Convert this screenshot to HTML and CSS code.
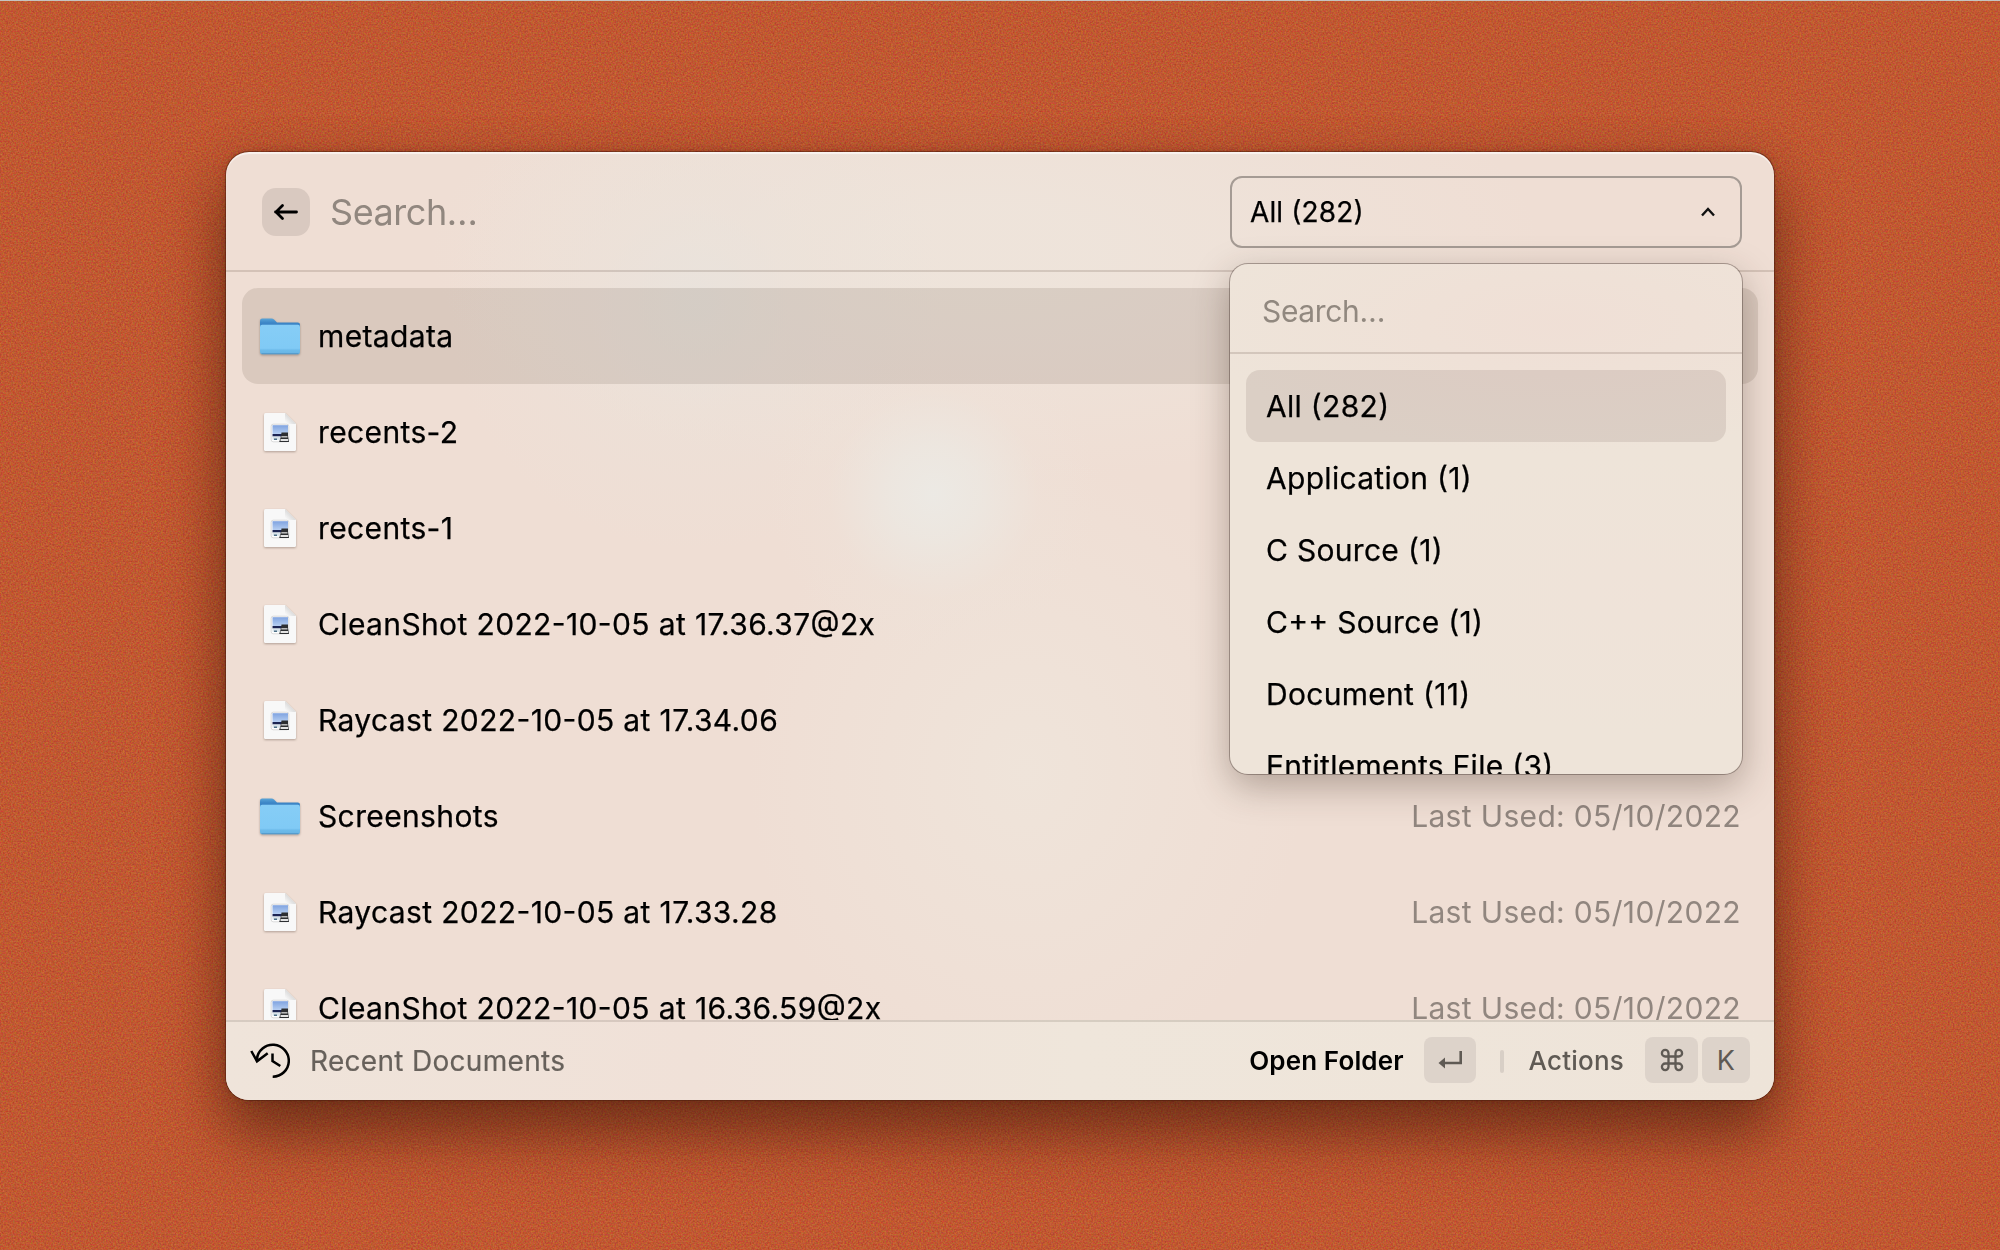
FILE: index.html
```
<!DOCTYPE html>
<html lang="en">
<head>
<meta charset="utf-8">
<title>Recent Documents</title>
<link rel="stylesheet" href="styles.css">
</head>
<body>
<svg class="grain" aria-hidden="true">
  <filter id="noise" x="0" y="0" width="100%" height="100%" color-interpolation-filters="sRGB">
    <feTurbulence type="fractalNoise" baseFrequency="0.6" numOctaves="2" seed="4"/>
    <feColorMatrix values="1.8 0 0 0 -0.4  0 1.8 0 0 -0.4  0 0 1.8 0 -0.4  0 0 0 0 1"/>
  </filter>
  <rect width="100%" height="100%" filter="url(#noise)"/>
</svg>

<svg class="defs" aria-hidden="true">
  <defs>
    <linearGradient id="folder-front" x1="0" y1="0" x2="0" y2="1">
      <stop offset="0" stop-color="#86cdf6"/><stop offset=".8" stop-color="#80caf5"/><stop offset=".86" stop-color="#6dbbea"/><stop offset="1" stop-color="#67b3e3"/>
    </linearGradient>
    <linearGradient id="folder-back" x1="0" y1="0" x2="0" y2="1">
      <stop offset="0" stop-color="#5aa5d8"/><stop offset=".25" stop-color="#3c85c6"/>
    </linearGradient>
    <linearGradient id="sky" x1="0" y1="0" x2="0" y2="1">
      <stop offset="0" stop-color="#7fa3e0"/><stop offset="1" stop-color="#b7cff2"/>
    </linearGradient>
    <linearGradient id="fold" x1="0" y1="1" x2="1" y2="0">
      <stop offset="0" stop-color="#ffffff"/><stop offset=".5" stop-color="#dcdcdc"/>
    </linearGradient>
    <symbol id="folder" viewBox="0 0 40 40">
      <path d="M0 4.700Q0 2.500 2.200 2.500H11.500Q13 2.500 14 3.500L17 6.500H37.800Q40 6.500 40 8.700V20H0Z" fill="url(#folder-back)"/>
      <rect y="8.700" width="40" height="29.500" rx="2.200" fill="url(#folder-front)"/>
      <path d="M1.500 37.700H38.500" stroke="#4f93c4" stroke-width=".9"/>
    </symbol>
    <symbol id="image-file" viewBox="0 0 40 40">
      <path d="M5.500 1H25L36 12V37.500Q36 39 34.500 39H5.500Q4 39 4 37.500V2.500Q4 1 5.500 1Z" fill="#f8f8f8"/>
      <path d="M25 1 36 12H26.500Q25 12 25 10.500Z" fill="url(#fold)"/>
      <rect x="11.200" y="12.200" width="17.600" height="17.600" rx="2" fill="#fff" stroke="#cdcdcd" stroke-width=".7"/>
      <rect x="12.500" y="13.200" width="15.500" height="8.800" fill="url(#sky)"/>
      <path d="M12.500 22H22V24.500H12.500Z" fill="#1b2452"/>
      <path d="M12.500 24.500H20V27.800H12.500Z" fill="#d9e4ea"/>
      <path d="M14 26.500H17V28H14Z" fill="#4d6f86"/>
      <path d="M21.500 20.500H28V24L29 30H19.200L21 24Z" fill="#2c2e31"/>
      <path d="M21.300 24.800H27.500" stroke="#c9c9c9" stroke-width="1.400"/>
      <path d="M20.500 28H28.200" stroke="#e4e4e4" stroke-width="2"/>
    </symbol>
  </defs>
</svg>

<main class="window">
  <header class="header">
    <button class="back" aria-label="Back"><svg viewBox="0 0 48 48"><path d="M13.500 24H34.500M20.500 17.500 14 24l6.500 6.500"/></svg></button>
    <div class="search">Search…</div>
    <div class="filter">
      <div class="select"><span>All (282)</span><svg viewBox="0 0 16 12"><path d="M2 9.500 8 3l6 6.500"/></svg></div>
      <div class="menu">
        <div class="menu-search">Search…</div>
        <div class="options">
          <div class="option active">All (282)</div>
          <div class="option">Application (1)</div>
          <div class="option">C Source (1)</div>
          <div class="option">C++ Source (1)</div>
          <div class="option">Document (11)</div>
          <div class="option">Entitlements File (3)</div>
        </div>
      </div>
    </div>
  </header>

  <section class="list">
    <div class="row active"><svg class="icon"><use href="#folder"/></svg><span class="name">metadata</span></div>
    <div class="row"><svg class="icon"><use href="#image-file"/></svg><span class="name">recents-2</span></div>
    <div class="row"><svg class="icon"><use href="#image-file"/></svg><span class="name">recents-1</span></div>
    <div class="row"><svg class="icon"><use href="#image-file"/></svg><span class="name">CleanShot 2022-10-05 at 17.36.37@2x</span></div>
    <div class="row"><svg class="icon"><use href="#image-file"/></svg><span class="name">Raycast 2022-10-05 at 17.34.06</span></div>
    <div class="row"><svg class="icon"><use href="#folder"/></svg><span class="name">Screenshots</span><span class="used">Last Used: 05/10/2022</span></div>
    <div class="row"><svg class="icon"><use href="#image-file"/></svg><span class="name">Raycast 2022-10-05 at 17.33.28</span><span class="used">Last Used: 05/10/2022</span></div>
    <div class="row"><svg class="icon"><use href="#image-file"/></svg><span class="name">CleanShot 2022-10-05 at 16.36.59@2x</span><span class="used">Last Used: 05/10/2022</span></div>
  </section>

  <footer class="footer">
    <svg class="history" viewBox="0 0 40 40"><path d="M6.900 18A16 16 0 1 1 22.700 35.700M1.300 10 7 20.300 17.700 12.300M22.500 12.500V20L30.300 25"/></svg>
    <span class="title">Recent Documents</span>
    <span class="primary">Open Folder</span>
    <span class="key enter"><svg viewBox="0 0 24 24"><path d="M22.700 3V15H5" fill="none" stroke="currentColor" stroke-width="2.600"/><path d="M0.500 15 7 9.500V20.500Z" fill="currentColor"/></svg></span>
    <span class="separator"></span>
    <span class="actions">Actions</span>
    <span class="key cmd"><svg viewBox="0 0 24 24"><path d="M8.500 8.500H15.500V15.500H8.500ZM8.500 8.500V5.200A3.300 3.300 0 1 0 5.200 8.500ZM15.500 8.500H18.800A3.300 3.300 0 1 0 15.500 5.200ZM15.500 15.500V18.800A3.300 3.300 0 1 0 18.800 15.500ZM8.500 15.500H5.200A3.300 3.300 0 1 0 8.500 18.800Z" fill="none" stroke="currentColor" stroke-width="2.300"/></svg></span>
    <span class="key letter">K</span>
  </footer>
</main>
</body>
</html>
```
FILE: styles.css
```
* { box-sizing: border-box; }

body {
  margin: 0;
  width: 2000px;
  height: 1250px;
  overflow: hidden;
  border-top: 1px solid #c6c3c0;
  background: #c05831;
  padding: 151px 226px 150px;
  font-family: Inter, "Liberation Sans", sans-serif;
  font-size: 30px;
  font-weight: 400;
  font-feature-settings: "calt" 1;
  letter-spacing: 0.37px;
  color: #000;
}

.grain {
  position: absolute;
  left: 0;
  top: 1px;
  width: 2000px;
  height: 1249px;
  opacity: 0.27;
  mix-blend-mode: overlay;
}

.defs { position: absolute; width: 0; height: 0; }

.window {
  position: relative;
  display: flex;
  flex-direction: column;
  width: 1548px;
  height: 948px;
  border-radius: 23px;
  background:
    radial-gradient(circle at 708px 342px, rgba(236, 234, 229, 0.95) 0, rgba(236, 233, 227, 0.75) 45px, rgba(238, 226, 217, 0.4) 105px, rgba(238, 224, 214, 0) 165px),
    radial-gradient(circle at 470px 150px, rgba(232, 227, 221, 0.8) 0, rgba(235, 226, 218, 0.5) 110px, rgba(238, 224, 214, 0) 250px),
    radial-gradient(ellipse 560px 230px at 760px 100px, rgba(238, 229, 220, 0.8) 20%, rgba(238, 224, 214, 0) 100%),
    radial-gradient(ellipse 280px 320px at 800px 620px, rgba(239, 229, 219, 0.85) 0, rgba(239, 224, 214, 0) 100%),
    #efded4;
  box-shadow:
    0 0 0 1px rgba(70, 25, 10, 0.45),
    0 0 6px rgba(60, 20, 5, 0.25),
    0 36px 60px rgba(50, 18, 5, 0.5),
    0 10px 50px rgba(50, 18, 5, 0.14),
    inset 0 2px 1px rgba(255, 255, 255, 0.6);
}

.header {
  flex: none;
  display: flex;
  align-items: center;
  height: 120px;
  padding: 2px 32px 0 36px;
  border-bottom: 2px solid rgba(90, 65, 55, 0.18);
}

.back {
  width: 48px;
  height: 48px;
  padding: 0;
  border: 0;
  border-radius: 14px;
  background: #d9c9c0;
}
.back svg {
  display: block;
  width: 48px;
  height: 48px;
  fill: none;
  stroke: #000;
  stroke-width: 2.8;
  stroke-linecap: round;
  stroke-linejoin: round;
}

.search {
  flex: 1;
  margin-left: 20px;
  font-size: 36px;
  letter-spacing: -0.45px;
  color: #91877f;
}

.filter { position: relative; width: 512px; }

.select {
  display: flex;
  align-items: center;
  justify-content: space-between;
  height: 72px;
  padding: 0 24px 0 18px;
  border: 2px solid #a59b94;
  border-radius: 12px;
  font-size: 28px;
  letter-spacing: 0.12px;
  -webkit-text-stroke: 0.25px currentColor;
}
.select svg {
  width: 16px;
  height: 12px;
  fill: none;
  stroke: #111;
  stroke-width: 2.4;
}

.menu {
  position: absolute;
  z-index: 2;
  left: 0;
  top: 88px;
  width: 512px;
  height: 510px;
  overflow: hidden;
  border-radius: 18px;
  background:
    radial-gradient(ellipse 360px 130px at 330px 60px, rgba(240, 222, 213, 0.8), rgba(240, 224, 214, 0)),
    radial-gradient(ellipse 260px 140px at 400px 330px, rgba(240, 226, 217, 0.6), rgba(240, 226, 217, 0)),
    #eee4d9;
  box-shadow:
    0 0 0 1px rgba(60, 45, 40, 0.38),
    0 12px 36px rgba(60, 40, 30, 0.34);
}
.menu-search {
  height: 90px;
  padding-left: 32px;
  border-bottom: 2px solid rgba(90, 65, 55, 0.18);
  line-height: 94px;
  letter-spacing: -0.35px;
  color: #91887f;
}
.options { padding: 16px 16px 0; }
.option {
  height: 72px;
  padding-left: 20px;
  border-radius: 14px;
  line-height: 72px;
  white-space: nowrap;
  letter-spacing: 0.3px;
  -webkit-text-stroke: 0.25px currentColor;
}
.option.active { background: rgba(90, 70, 65, 0.13); }

.list {
  flex: 1;
  min-height: 0;
  overflow: hidden;
  padding: 16px 16px 0;
}
.row {
  display: flex;
  align-items: center;
  height: 96px;
  padding: 0 17px 0 18px;
  border-radius: 16px;
}
.row.active { background: rgba(80, 60, 45, 0.13); }
.icon {
  width: 40px;
  height: 40px;
  margin-right: 18px;
  filter: drop-shadow(0 1px 1px rgba(60, 40, 30, 0.35));
}
.name {
  flex: 1;
  -webkit-text-stroke: 0.25px currentColor;
}
.used {
  letter-spacing: 0.34px;
  color: #91867f;
}

.footer {
  flex: none;
  display: flex;
  align-items: center;
  height: 80px;
  padding: 0 24px;
  border-top: 2px solid rgba(90, 75, 65, 0.16);
  border-radius: 0 0 23px 23px;
  background: linear-gradient(90deg, #efe4da, #f0e1d8 30%, #efe6db 55%, #eee4d9);
  font-size: 26px;
  font-weight: 500;
  letter-spacing: 0.2px;
  color: #5f5a54;
}
.history {
  width: 40px;
  height: 40px;
  fill: none;
  stroke: #000;
  stroke-width: 2.5;
}
.title {
  flex: 1;
  margin-left: 20px;
  font-size: 28px;
  font-weight: 400;
  letter-spacing: 0.3px;
  color: #67615b;
  -webkit-text-stroke: 0.2px currentColor;
}
.primary {
  margin-top: -2px;
  font-weight: 600;
  letter-spacing: 0.12px;
  color: #000;
}
.actions { margin-top: -2px; }
.key {
  display: flex;
  align-items: center;
  justify-content: center;
  height: 46px;
  margin-top: -2px;
  border-radius: 8px;
  background: #ddd3ca;
  font-weight: 400;
  font-size: 27px;
}
.key svg { width: 24px; height: 24px; }
.enter { width: 52px; margin-left: 20px; }
.separator {
  width: 4px;
  height: 23px;
  margin: 0 25px 0 24px;
  border-radius: 2px;
  background: #d8cfc6;
}
.cmd { width: 53px; margin-left: 21px; }
.letter { width: 48px; margin-left: 4px; }
```
